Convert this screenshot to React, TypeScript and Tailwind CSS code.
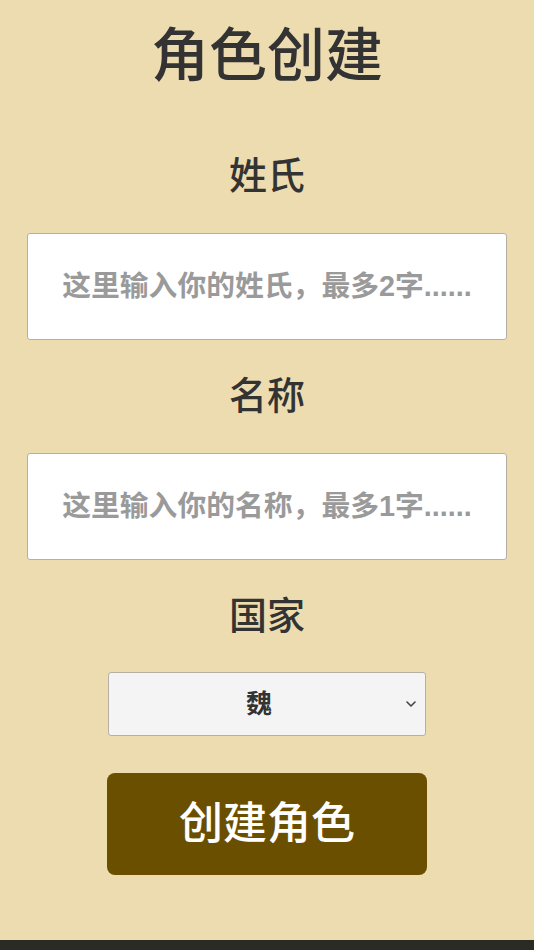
import React from "react";

export default function App() {
  const font = { fontFamily: '"Liberation Sans", "Noto Sans CJK SC", sans-serif' };
  return (
    <div className="min-h-[950px] w-full bg-[#2a2b25]" style={font}>
      <div className="flex h-[940px] w-full flex-col items-center bg-[#ecdcb0] pt-[27px] text-[#333333]">
        <h1 className="h-[58px] text-[58px] font-medium leading-[58px]">角色创建</h1>
        <div className="mt-[72px] h-[38px] text-[38px] font-medium leading-[38px]">姓氏</div>
        <input
          className="mt-[38px] h-[107px] w-[480px] rounded-[3px] border border-[#b4b0a6] bg-white px-2 text-center text-[28.8px] font-bold text-[#333] outline-none placeholder:text-[#9a9a9a]"
          placeholder="这里输入你的姓氏，最多2字......"
        />
        <div className="mt-[37px] h-[38px] text-[38px] font-medium leading-[38px]">名称</div>
        <input
          className="mt-[38px] h-[107px] w-[480px] rounded-[3px] border border-[#b4b0a6] bg-white px-2 text-center text-[28.8px] font-bold text-[#333] outline-none placeholder:text-[#9a9a9a]"
          placeholder="这里输入你的名称，最多1字......"
        />
        <div className="mt-[37px] h-[38px] text-[38px] font-medium leading-[38px]">国家</div>
        <div className="relative mt-[37px] h-[64px] w-[318px]">
          <select
            className="h-full w-full appearance-none rounded-[3px] border border-[#b4b0a6] bg-[#f4f4f4] pr-[16px] text-center text-[26px] font-bold text-[#333] outline-none"
            defaultValue="魏"
          >
            <option value="魏">魏</option>
            <option value="蜀">蜀</option>
            <option value="吴">吴</option>
          </select>
          <svg
            className="pointer-events-none absolute right-[10px] top-[29px]"
            width="10"
            height="6"
            viewBox="0 0 10 6"
            fill="none"
          >
            <path d="M1 1l4 4 4-4" stroke="#444" strokeWidth="1.6" strokeLinecap="round" strokeLinejoin="round" />
          </svg>
        </div>
        <button className="mt-[37px] h-[102px] w-[320px] rounded-[8px] bg-[#6b4f00] text-[44px] font-medium text-white">
          创建角色
        </button>
      </div>
    </div>
  );
}
